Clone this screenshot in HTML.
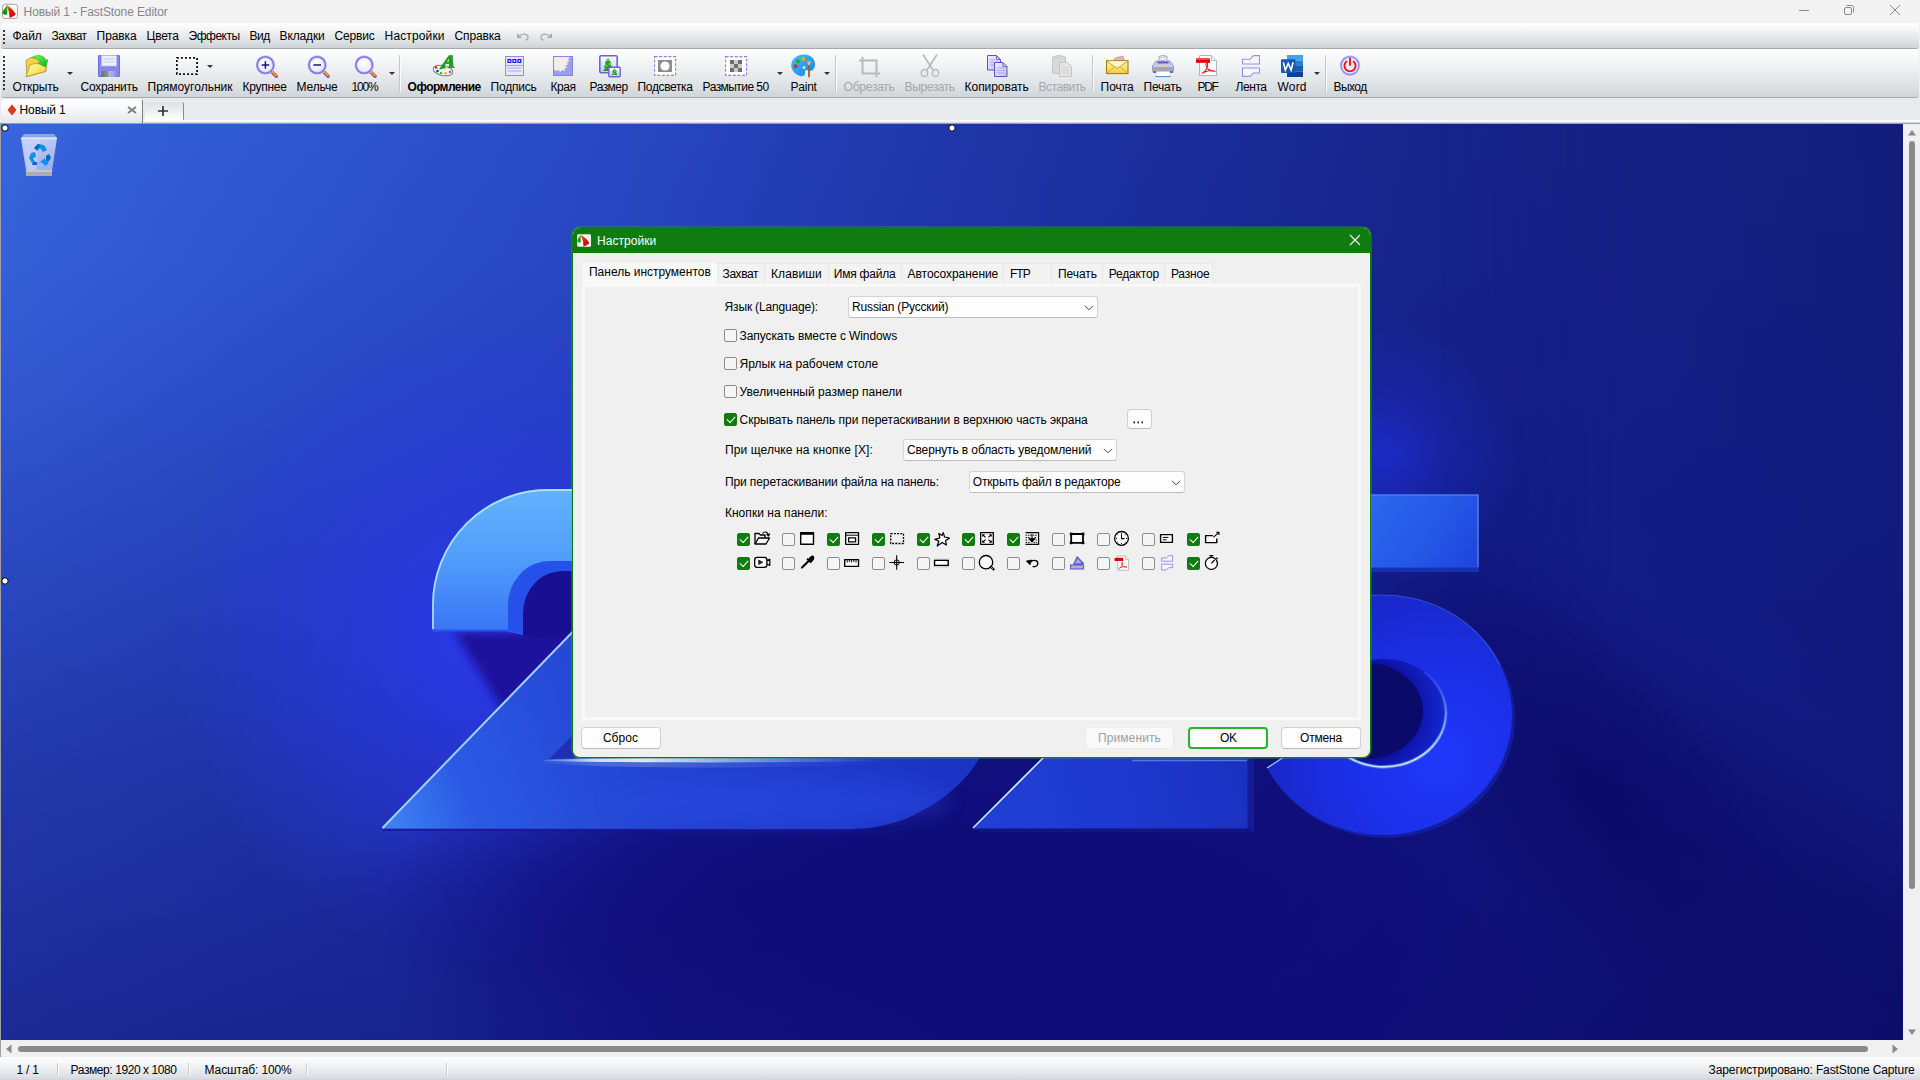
<!DOCTYPE html>
<html lang="ru"><head>
<meta charset="utf-8">
<title>Новый 1 - FastStone Editor</title>
<style>
*{box-sizing:border-box;margin:0;padding:0}
html,body{width:1920px;height:1080px;overflow:hidden}
body{position:relative;background:#f0f0f0;font-family:"Liberation Sans",sans-serif;font-size:12px;color:#000;line-height:14px}
.abs{position:absolute}
.t{position:absolute;white-space:nowrap;line-height:14px;height:14px;margin-left:.6px}
svg{position:absolute;overflow:visible}
/* ---------- chrome ---------- */
#titlebar{left:0;top:0;width:1920px;height:23px;background:#f3f3f3}
#menubar{left:1px;top:23px;width:1918px;height:26px;border-radius:3px;
  background:linear-gradient(#ffffff 0,#fcfdfd 10%,#eff2f3 35%,#dde2e5 72%,#cdd3d7 100%);border-bottom:1px solid #a6aaad}
#toolbar{left:1px;top:49px;width:1918px;height:49px;border-radius:3px;
  background:linear-gradient(#ffffff 0,#fbfcfc 6%,#eff1f3 38%,#e0e4e7 72%,#cfd5d9 100%);border-bottom:1px solid #a6aaad}
#tabbar{left:0;top:98px;width:1920px;height:26px;background:#e8ebee}
.grip{position:absolute;left:2px;width:2px;
  background:repeating-linear-gradient(#3a3a3a 0,#3a3a3a 2px,transparent 2px,transparent 4px)}
.sep{position:absolute;top:55px;width:2px;height:37px;background:linear-gradient(90deg,#c4c8cc 0,#c4c8cc 1px,#fbfbfc 1px)}
.dd{position:absolute;width:0;height:0;border:3px solid transparent;border-top:3px solid #333;border-bottom:0}
.t.dis{color:#a6a6a6}
/* ---------- status ---------- */
#status{left:0;top:1057px;width:1920px;height:23px;background:linear-gradient(#ffffff 0,#f2f4f6 35%,#dde1e5 85%,#d2d6da 100%)}
.ssep{position:absolute;top:6px;width:2px;height:13px;background:linear-gradient(90deg,#c9cdd1 0,#c9cdd1 1px,#fff 1px)}
/* ---------- dialog ---------- */
#dlg{left:572px;top:227px;width:799px;height:531px;border-radius:8px;background:#f0f0f0;border:1px solid #107c10;overflow:hidden;
  box-shadow:0 0 0 0.5px rgba(40,200,40,.55)}
#dlgtitle{left:0;top:0;width:797px;height:26px;background:#107c10}
.cb{position:absolute;width:13px;height:13px;border:1px solid #8c8c8c;border-radius:2px;background:#f5f5f5}
.cb.on{background:#107c10;border-color:#107c10}
.cb.on:after{content:"";position:absolute;left:2px;top:2px;width:7px;height:4px;border-left:1.5px solid #fff;border-bottom:1.5px solid #fff;transform:rotate(-48deg);transform-origin:50% 50%}
.combo{position:absolute;background:#fdfdfd;border:1px solid #d4d4d4;border-bottom-color:#bdbdbd;border-radius:3px}
.btn{position:absolute;background:#fdfdfd;border:1px solid #d0d0d0;border-bottom-color:#bcbcbc;border-radius:4px}
.dtab{position:absolute;border:1px solid #e7e7e7;border-bottom:0;background:#f3f3f3}
</style>
</head>
<body>
<!-- WALLPAPER -->
<div class="abs" id="canvas" style="left:1px;top:124px;width:1902px;height:916px;overflow:hidden;background:#1a2a9a">
<svg width="1902" height="916" viewBox="1 124 1902 916" style="left:0;top:0">
<defs>
<linearGradient id="bgH" x1="0" y1="0" x2="1" y2="0">
<stop offset="0" stop-color="#3865dc"></stop><stop offset=".12" stop-color="#3059d4"></stop><stop offset=".30" stop-color="#294ac6"></stop>
<stop offset=".42" stop-color="#233eb4"></stop><stop offset=".55" stop-color="#1d32a2"></stop><stop offset=".70" stop-color="#182891"></stop>
<stop offset=".85" stop-color="#131d7b"></stop><stop offset="1" stop-color="#10196d"></stop>
</linearGradient>
<linearGradient id="bgV" x1="0" y1="0" x2="0" y2="1">
<stop offset="0" stop-color="#0a0680" stop-opacity="0"></stop><stop offset=".15" stop-color="#0a0680" stop-opacity=".05"></stop>
<stop offset=".3" stop-color="#0a0680" stop-opacity=".15"></stop><stop offset=".42" stop-color="#0a067c" stop-opacity=".25"></stop>
<stop offset=".7" stop-color="#0a0670" stop-opacity=".46"></stop><stop offset="1" stop-color="#0a0668" stop-opacity=".62"></stop>
</linearGradient>
<linearGradient id="bandG" gradientUnits="userSpaceOnUse" x1="1560" y1="760" x2="1720" y2="555">
<stop offset="0" stop-color="#1b2b9b" stop-opacity="0"></stop><stop offset=".3" stop-color="#1b2b9b" stop-opacity=".04"></stop><stop offset=".5" stop-color="#1b2b9b" stop-opacity=".22"></stop>
<stop offset=".7" stop-color="#1b2b9b" stop-opacity=".36"></stop><stop offset="1" stop-color="#1a2a9a" stop-opacity=".32"></stop>
</linearGradient>
<linearGradient id="bandM" gradientUnits="userSpaceOnUse" x1="1440" y1="0" x2="1620" y2="0">
<stop offset="0" stop-color="#fff" stop-opacity="0"></stop><stop offset="1" stop-color="#fff" stop-opacity="1"></stop>
</linearGradient>
<mask id="bandMask" maskUnits="userSpaceOnUse" x="1" y="124" width="1902" height="916"><rect x="1" y="124" width="1902" height="916" fill="url(#bandM)"></rect></mask>
<radialGradient id="glow5" cx="1385" cy="455" r="135" gradientUnits="userSpaceOnUse">
<stop offset="0" stop-color="#2030e0" stop-opacity=".7"></stop><stop offset=".5" stop-color="#1e2cd0" stop-opacity=".3"></stop><stop offset="1" stop-color="#1e2cd0" stop-opacity="0"></stop>
</radialGradient>
<radialGradient id="glowL" cx="500" cy="640" r="330" gradientUnits="userSpaceOnUse">
<stop offset="0" stop-color="#2c38ee" stop-opacity=".95"></stop><stop offset=".5" stop-color="#2a3ae6" stop-opacity=".55"></stop><stop offset="1" stop-color="#2a3ae6" stop-opacity="0"></stop>
</radialGradient>
<radialGradient id="darkC" cx="1000" cy="930" r="620" gradientUnits="userSpaceOnUse" gradientTransform="translate(0 420) scale(1 .55)">
<stop offset="0" stop-color="#0e0a78" stop-opacity=".95"></stop><stop offset=".6" stop-color="#0e0a78" stop-opacity=".7"></stop><stop offset="1" stop-color="#0e0a78" stop-opacity="0"></stop>
</radialGradient>
<linearGradient id="faceA" x1="0" y1="489" x2="0" y2="630" gradientUnits="userSpaceOnUse">
<stop offset="0" stop-color="#62b2fd"></stop><stop offset=".45" stop-color="#52a0fb"></stop><stop offset="1" stop-color="#3a76f6"></stop>
</linearGradient>
<linearGradient id="faceB" x1="382" y1="828" x2="900" y2="640" gradientUnits="userSpaceOnUse">
<stop offset="0" stop-color="#3f86f4"></stop><stop offset=".16" stop-color="#2b5ae4"></stop><stop offset=".5" stop-color="#2343d2"></stop><stop offset="1" stop-color="#1c34c6"></stop>
</linearGradient>
<linearGradient id="faceC" x1="972" y1="828" x2="1247" y2="757" gradientUnits="userSpaceOnUse">
<stop offset="0" stop-color="#2040d6"></stop><stop offset=".5" stop-color="#1e3ad0"></stop><stop offset="1" stop-color="#1a30c0"></stop>
</linearGradient>
<linearGradient id="bar5" x1="1370" y1="494" x2="1478" y2="568" gradientUnits="userSpaceOnUse">
<stop offset="0" stop-color="#2a68ee"></stop><stop offset=".6" stop-color="#2456e6"></stop><stop offset="1" stop-color="#1e44da"></stop>
</linearGradient>
<radialGradient id="ring5" cx="1440" cy="760" r="190" gradientUnits="userSpaceOnUse">
<stop offset="0" stop-color="#1f38fa"></stop><stop offset=".45" stop-color="#1c30ea"></stop><stop offset="1" stop-color="#1826c4"></stop>
</radialGradient>
<linearGradient id="hlBase" gradientUnits="userSpaceOnUse" x1="542" y1="0" x2="878" y2="0"><stop offset="0" stop-color="#8fc4ff" stop-opacity=".25"></stop><stop offset=".15" stop-color="#dbe7ee" stop-opacity=".9"></stop><stop offset=".3" stop-color="#e6efef" stop-opacity=".95"></stop><stop offset=".6" stop-color="#a4c6f2" stop-opacity=".65"></stop><stop offset="1" stop-color="#5a90ff" stop-opacity=".1"></stop></linearGradient>
<linearGradient id="binG" x1="0" y1="0" x2=".3" y2="1"><stop offset="0" stop-color="#c6d2f8"></stop><stop offset="1" stop-color="#9db2ea"></stop></linearGradient>
<radialGradient id="wall5" cx="1366" cy="711" r="80" gradientUnits="userSpaceOnUse"><stop offset=".6" stop-color="#0c10a0"></stop><stop offset="1" stop-color="#1628d4"></stop></radialGradient>
<linearGradient id="hl5" gradientUnits="userSpaceOnUse" x1="1432" y1="668" x2="1372" y2="770"><stop offset="0" stop-color="#7fb6ff" stop-opacity="0"></stop><stop offset=".35" stop-color="#9ccfff" stop-opacity=".7"></stop><stop offset=".7" stop-color="#c8eeff" stop-opacity="1"></stop><stop offset="1" stop-color="#bfe6ff" stop-opacity=".95"></stop></linearGradient>
<filter id="b4" x="-20%" y="-20%" width="140%" height="140%"><feGaussianBlur stdDeviation="4"></feGaussianBlur></filter>
<filter id="b8" x="-30%" y="-30%" width="160%" height="160%"><feGaussianBlur stdDeviation="9"></feGaussianBlur></filter>
<filter id="b20" x="-100%" y="-100%" width="300%" height="300%"><feGaussianBlur stdDeviation="55"></feGaussianBlur></filter>
<filter id="b1"><feGaussianBlur stdDeviation=".6"></feGaussianBlur></filter>
<radialGradient id="blobL"><stop offset="0" stop-color="#1c2c9a" stop-opacity=".55"></stop><stop offset=".5" stop-color="#1c2c9a" stop-opacity=".3"></stop><stop offset="1" stop-color="#1c2c9a" stop-opacity="0"></stop></radialGradient>
<radialGradient id="blobD"><stop offset="0" stop-color="#0e0a76" stop-opacity=".6"></stop><stop offset=".6" stop-color="#0e0a76" stop-opacity=".3"></stop><stop offset="1" stop-color="#0e0a76" stop-opacity="0"></stop></radialGradient>
<radialGradient id="blobS"><stop offset="0" stop-color="#0a0766" stop-opacity=".65"></stop><stop offset=".55" stop-color="#0a0766" stop-opacity=".35"></stop><stop offset="1" stop-color="#0a0766" stop-opacity="0"></stop></radialGradient>
</defs>
<rect x="1" y="124" width="1902" height="916" fill="url(#bgH)"></rect>
<rect x="1" y="124" width="1902" height="916" fill="url(#bgV)"></rect>
<rect x="1" y="124" width="1902" height="916" fill="url(#glowL)"></rect>
<rect x="1" y="124" width="1902" height="916" fill="url(#darkC)"></rect>
<!-- light band right -->
<rect x="1400" y="124" width="503" height="916" fill="url(#bandG)" mask="url(#bandMask)"></rect>
<rect x="1200" y="280" width="400" height="400" fill="url(#glow5)"></rect>
<!-- shadows -->
<polygon points="455,632 523,632 640,600 640,760 548,760 500,706" fill="#1a0f96" opacity=".9" filter="url(#b4)"></polygon>
<ellipse cx="860" cy="900" rx="560" ry="120" fill="url(#blobD)"></ellipse>
<ellipse cx="0" cy="0" rx="330" ry="130" transform="translate(1590 790) rotate(48)" fill="url(#blobS)"></ellipse>
<!-- 2 : hook -->
<path d="M523,636 V612 A40,42 0 0 1 565,570 H640 V640 Z" fill="#190f92"></path>
<path d="M508,632 V605 A42,44 0 0 1 550,561 H640 V571 H565 A40,42 0 0 0 523,613 V634 Z" fill="#2650ea"></path>
<path d="M432,630 V605 A116,116 0 0 1 548,489 H640 V561 H550 A42,44 0 0 0 508,605 V630 Z" fill="url(#faceA)"></path>
<path d="M433,629 V605 A115,115 0 0 1 548,490 H640" fill="none" stroke="#b6e2ff" stroke-width="1.8" opacity=".9"></path>
<path d="M432,630.5 H508 L523,634" fill="none" stroke="#2a56ee" stroke-width="2"></path>
<!-- 2 : diagonal + base (+0 bottom) -->
<path d="M382,828.5 L640,562 V740 H1000 L980,757 C968,778 948,800 905,819 C885,826 868,829 850,829 Z" fill="url(#faceB)"></path>
<polygon points="549,759 575,733 575,759" fill="#2029ac" opacity=".85"></polygon>
<ellipse cx="780" cy="802" rx="170" ry="24" fill="#2a4ee8" opacity=".35" filter="url(#b8)"></ellipse>
<line x1="382.5" y1="828" x2="573" y2="631.5" stroke="#a9d8ff" stroke-width="2" opacity=".95"></line>
<ellipse cx="710" cy="761.5" rx="168" ry="6" fill="url(#hlBase)" opacity=".22"></ellipse>
<ellipse cx="710" cy="760.3" rx="168" ry="2.1" fill="url(#hlBase)"></ellipse>
<rect x="383" y="829" width="470" height="2" fill="#16189a" opacity=".8"></rect>
<!-- second 2 -->
<polygon points="1247,757 1254,759 1254,833 1247,829" fill="#141c94"></polygon>
<polygon points="972.5,828.5 1247.5,828.5 1253,832 980,832" fill="#121484"></polygon>
<polygon points="972.5,828.5 1075,726 1247.5,726 1247.5,828.5" fill="url(#faceC)"></polygon>
<line x1="973" y1="828" x2="1044" y2="757" stroke="#cfe6ff" stroke-width="1.6"></line>
<line x1="1132" y1="760.5" x2="1247" y2="760.5" stroke="#5a8cf0" stroke-width="1.5" opacity=".8"></line>
<!-- 5 -->
<rect x="1340" y="567" width="139" height="5" fill="#1630b4"></rect>
<rect x="1340" y="494.5" width="138.5" height="73" fill="url(#bar5)"></rect>
<path d="M1340,495 H1478 V567" fill="none" stroke="#5f9cff" stroke-width="1.2" opacity=".8"></path>
<g clip-path="url(#clip5)">
<ellipse cx="1386" cy="718" rx="129" ry="120" fill="#131c9c"></ellipse>
<ellipse cx="1383" cy="715" rx="129" ry="120" fill="url(#ring5)"></ellipse>
<ellipse cx="1384" cy="713" rx="62" ry="54" fill="url(#wall5)"></ellipse>
<ellipse cx="1366" cy="711" rx="57" ry="48" fill="#0b0a6a"></ellipse>
<path d="M1424,671.7 A62,54 0 1 1 1330,739.6" fill="none" stroke="url(#hl5)" stroke-width="3.6" opacity=".35"></path>
<path d="M1424,671.7 A62,54 0 1 1 1330,739.6" fill="none" stroke="url(#hl5)" stroke-width="1.7"></path>
<path d="M1300,623 A129,120 0 0 1 1500,665" fill="none" stroke="#4a78ff" stroke-width="1.2" opacity=".5"></path>
</g>
<clipPath id="clip5"><polygon points="1267,768 1300,745 1300,560 1560,560 1560,900 1200,900 1200,780"></polygon></clipPath>
<line x1="1267" y1="768" x2="1284" y2="757" stroke="#9cc8ff" stroke-width="1.2"></line>
<!-- recycle bin -->
<g>
<polygon points="24,134 54,134 57,138 21,138" fill="#8fa6e4"></polygon>
<polygon points="21,138 57,138 52,171 26,171" fill="url(#binG)"></polygon>
<polygon points="23,139 40,139 36,170 27,170" fill="#c6d2f8" opacity=".7"></polygon>
<rect x="21" y="137.5" width="36" height="1.5" fill="#e6ecff"></rect>
<rect x="26" y="170" width="26" height="6" fill="#a9adb0"></rect>
<rect x="26" y="170" width="26" height="2" fill="#c4c8cc"></rect>
<path d="M34,148 l4,-4 6,1 3,5 -4,2 -3,-4 -3,3z" fill="#0a92ea"></path>
<path d="M34,148 l4,-4 2,1 -2,5z" fill="#0868c4"></path>
<path d="M31,153 l4,-1 1,5 -3,1 2,4 -3,1 -3,-5z" fill="#0a92ea"></path>
<path d="M33,162 h4 v3 h-5z" fill="#0868c4"></path>
<path d="M40,162 l5,-4 v2 l4,-1 -1,5 -4,2 v-2z" fill="#0a92ea"></path>
<path d="M46,156 l3,-2 2,4 -2,3 -3,-1z" fill="#0868c4"></path>
</g>
<!-- handles -->
<circle cx="5" cy="128" r="3.2" fill="#fff" stroke="#000" stroke-width="1"></circle>
<circle cx="952" cy="128" r="3.2" fill="#fff" stroke="#000" stroke-width="1"></circle>
<circle cx="5" cy="581" r="3.2" fill="#fff" stroke="#000" stroke-width="1"></circle>
</svg>

</div>
<div class="abs" style="left:0;top:124px;width:1px;height:934px;background:#a0a0a0"></div>

<!-- TITLE BAR -->
<div class="abs" id="titlebar">
<svg width="20" height="20" viewBox="0 0 20 20" style="left:0;top:0">
<defs><linearGradient id="sailG" x1="0" y1="0" x2="0" y2="1"><stop offset="0" stop-color="#2bd326"></stop><stop offset="1" stop-color="#0a860f"></stop></linearGradient>
<linearGradient id="sailR" x1="0" y1="0" x2=".6" y2="1"><stop offset="0" stop-color="#ff6a24"></stop><stop offset=".55" stop-color="#e81a08"></stop><stop offset="1" stop-color="#c40000"></stop></linearGradient></defs>
<rect x="2.5" y="4.3" width="15" height="14.2" rx="2.2" fill="#f6f6f6" stroke="#a9a9a9"></rect>
<path d="M10.8,3 C9.4,4.4 8,5.4 7.3,6 C7.6,8.6 7.2,12 6.8,14.8 C5.2,15 3.4,14.4 2.1,13 C3,10.6 4.8,7.8 6.6,6 C8,5 9.6,3.8 10.8,3 Z" fill="url(#sailG)"></path>
<path d="M6.4,5.3 C10,6.8 13.8,10.4 15.8,14.4 C14,16 11.6,17.2 9.5,17.8 C9.6,13.4 8.4,8.8 6.4,5.3 Z" fill="url(#sailR)"></path>
</svg>
<span class="t" style="left: 23px; top: 5px; color: rgb(134, 134, 134); letter-spacing: -0.12px;">Новый 1 - FastStone Editor</span>
<svg width="12" height="12" viewBox="0 0 12 12" style="left:1798px;top:4px"><path d="M1,6.5 H11" stroke="#8a8a8a" stroke-width="1"></path></svg>
<svg width="12" height="12" viewBox="0 0 12 12" style="left:1843px;top:4px"><rect x="1.5" y="3.5" width="7" height="7" rx="1.5" fill="none" stroke="#8a8a8a"></rect><path d="M3.5,1.5 H8.5 A2,2 0 0 1 10.5,3.5 V8.5" fill="none" stroke="#8a8a8a"></path></svg>
<svg width="12" height="12" viewBox="0 0 12 12" style="left:1889px;top:4px"><path d="M1,1 L11,11 M11,1 L1,11" stroke="#8a8a8a" stroke-width="1"></path></svg>

</div>
<!-- MENU -->
<div class="abs" id="menubar">
<div class="grip" style="top:7px;height:14px"></div>
<span class="t" style="left: 11px; top: 6px; letter-spacing: -0.13px;">Файл</span>
<span class="t" style="left: 50px; top: 6px; letter-spacing: -0.51px;">Захват</span>
<span class="t" style="left: 95px; top: 6px; letter-spacing: -0.09px;">Правка</span>
<span class="t" style="left: 145px; top: 6px; letter-spacing: -0.29px;">Цвета</span>
<span class="t" style="left: 187px; top: 6px; letter-spacing: -0.51px;">Эффекты</span>
<span class="t" style="left: 248px; top: 6px; letter-spacing: -0.57px;">Вид</span>
<span class="t" style="left: 278px; top: 6px; letter-spacing: -0.15px;">Вкладки</span>
<span class="t" style="left: 333px; top: 6px; letter-spacing: -0.18px;">Сервис</span>
<span class="t" style="left: 383px; top: 6px; letter-spacing: 0.13px;">Настройки</span>
<span class="t" style="left: 453px; top: 6px; letter-spacing: -0.15px;">Справка</span>
<svg width="14" height="10" viewBox="0 0 14 10" style="left:515px;top:9px"><path d="M1,1 V6 H6 Z" fill="#a9adb2"></path><path d="M3,5 C5,1.5 11,1 12,4.5 C12.5,6.5 11,8 9.5,8" fill="none" stroke="#a9adb2" stroke-width="1.3"></path></svg>
<svg width="14" height="10" viewBox="0 0 14 10" style="left:538px;top:9px"><path d="M13,1 V6 H8 Z" fill="#a9adb2"></path><path d="M11,5 C9,1.5 3,1 2,4.5 C1.5,6.5 3,8 4.5,8" fill="none" stroke="#a9adb2" stroke-width="1.3"></path></svg>

</div>
<!-- TOOLBAR -->
<div class="abs" id="toolbar">
<div class="grip" style="top:7px;height:34px"></div>
<span class="t" style="left: 11px; top: 31px; letter-spacing: -0.16px;">Открыть</span>
<span class="t" style="left: 79px; top: 31px; letter-spacing: -0.29px;">Сохранить</span>
<span class="t" style="left: 146px; top: 31px; letter-spacing: 0.01px;">Прямоугольник</span>
<span class="t" style="left: 241px; top: 31px; letter-spacing: -0.29px;">Крупнее</span>
<span class="t" style="left: 295px; top: 31px; letter-spacing: -0.13px;">Мельче</span>
<span class="t" style="left: 350px; top: 31px; letter-spacing: -1.18px;">100%</span>
<span class="t" style="left: 406px; top: 31px; font-weight: bold; letter-spacing: -0.55px;">Оформление</span>
<span class="t" style="left: 489px; top: 31px; letter-spacing: -0.21px;">Подпись</span>
<span class="t" style="left: 549px; top: 31px; letter-spacing: -0.46px;">Края</span>
<span class="t" style="left: 588px; top: 31px; letter-spacing: -0.54px;">Размер</span>
<span class="t" style="left: 636px; top: 31px; letter-spacing: -0.36px;">Подсветка</span>
<span class="t" style="left: 701px; top: 31px; letter-spacing: -0.55px;">Размытие 50</span>
<span class="t" style="left: 789px; top: 31px; letter-spacing: -0.27px;">Paint</span>
<span class="t dis" style="left: 842px; top: 31px; letter-spacing: -0.24px;">Обрезать</span>
<span class="t dis" style="left: 903px; top: 31px; letter-spacing: -0.42px;">Вырезать</span>
<span class="t" style="left: 963px; top: 31px; letter-spacing: -0.06px;">Копировать</span>
<span class="t dis" style="left: 1037px; top: 31px; letter-spacing: -0.48px;">Вставить</span>
<span class="t" style="left: 1099px; top: 31px; letter-spacing: -0.07px;">Почта</span>
<span class="t" style="left: 1142px; top: 31px; letter-spacing: -0.22px;">Печать</span>
<span class="t" style="left: 1196px; top: 31px; letter-spacing: -1.33px;">PDF</span>
<span class="t" style="left: 1234px; top: 31px; letter-spacing: -0.44px;">Лента</span>
<span class="t" style="left: 1276px; top: 31px; letter-spacing: 0.14px;">Word</span>
<span class="t" style="left: 1332px; top: 31px; letter-spacing: -0.58px;">Выход</span>
<div class="sep" style="left:398px;top:6px"></div>
<div class="sep" style="left:834px;top:6px"></div>
<div class="sep" style="left:1091px;top:6px"></div>
<div class="sep" style="left:1324px;top:6px"></div>
<div class="dd" style="left:66px;top:23px"></div>
<div class="dd" style="left:206px;top:16px"></div>
<div class="dd" style="left:388px;top:23px"></div>
<div class="dd" style="left:776px;top:23px"></div>
<div class="dd" style="left:823px;top:23px"></div>
<div class="dd" style="left:1313px;top:23px"></div>
<svg width="1400" height="48" viewBox="0 50 1400 48" style="left:-1px;top:1px">
<defs>
<linearGradient id="gFold" x1="0" y1="0" x2="1" y2="1"><stop offset="0" stop-color="#fffac0"></stop><stop offset=".55" stop-color="#fae860"></stop><stop offset="1" stop-color="#eac436"></stop></linearGradient>
<linearGradient id="gGreen" x1="0" y1="0" x2="1" y2="1"><stop offset="0" stop-color="#8cf65a"></stop><stop offset=".6" stop-color="#2fd62c"></stop><stop offset="1" stop-color="#12a81c"></stop></linearGradient>
<radialGradient id="gLens" cx=".4" cy=".35" r=".7"><stop offset="0" stop-color="#ffffff"></stop><stop offset="1" stop-color="#e6e6fb"></stop></radialGradient>
<linearGradient id="gDoc" x1="0" y1="0" x2="1" y2="1"><stop offset="0" stop-color="#f0eeff"></stop><stop offset="1" stop-color="#c2bef6"></stop></linearGradient>
<linearGradient id="gEnv" x1="0" y1="0" x2="0" y2="1"><stop offset="0" stop-color="#fff6a8"></stop><stop offset="1" stop-color="#f3cf3e"></stop></linearGradient>
<linearGradient id="gPal" x1="0" y1="0" x2="1" y2="1"><stop offset="0" stop-color="#43c0fa"></stop><stop offset="1" stop-color="#1483e0"></stop></linearGradient>
<linearGradient id="gPic" x1="0" y1="0" x2="0" y2="1"><stop offset="0" stop-color="#ffffff"></stop><stop offset="1" stop-color="#bcd0f6"></stop></linearGradient>
<linearGradient id="gShut" x1="0" y1="0" x2="1" y2="0"><stop offset="0" stop-color="#60707a"></stop><stop offset=".45" stop-color="#8c989f"></stop><stop offset=".55" stop-color="#c0c6ea"></stop><stop offset="1" stop-color="#8a8ae0"></stop></linearGradient>
</defs>
<!-- open -->
<path d="M26,60.5 L31,57.5 L37,58.5 L38,61 L46,62.5 L46,71 L27,76.5 Z" fill="#f2d44c" stroke="#b98c1e" stroke-width=".8"></path>
<path d="M26,76.6 L30,64.5 L47,61.5 L45.5,71.5 Z" fill="url(#gFold)" stroke="#b98c1e" stroke-width=".8"></path>
<path d="M31.5,57.6 C37,54 44.5,55.5 46,60.2 L48,59.6 L45.4,67 L38,63.4 L40.8,62.4 C39.6,59.6 36.5,58 31.5,57.6 Z" fill="url(#gGreen)" stroke="#18a81e" stroke-width=".5"></path>
<!-- save -->
<rect x="98.5" y="55.5" width="21" height="21" rx=".5" fill="#8686ee" stroke="#6e6edc" stroke-width="1"></rect>
<rect x="101.5" y="55.5" width="15" height="10.5" fill="#e9f1fd" stroke="#b5c0ea" stroke-width=".6"></rect>
<path d="M103.5,59 H114.5 M103.5,62 H114.5" stroke="#b9c4da" stroke-width=".8"></path>
<rect x="101.5" y="71" width="15" height="6" fill="url(#gShut)"></rect>
<rect x="110" y="72" width="3" height="5" fill="#a6a6ec"></rect>
<!-- rect select -->
<rect x="176.9" y="57.9" width="20.2" height="16.2" fill="none" stroke="#111" stroke-width="1.8" stroke-dasharray="2 2.04"></rect>
<!-- zoom in/out/100 -->
<g id="mag">
<path d="M271.3,71.3 L276.3,76.3" stroke="#9c3f96" stroke-width="3.4" stroke-linecap="round"></path>
<path d="M271.6,71.0 L276.2,75.6" stroke="#e0a91e" stroke-width="2" stroke-linecap="round"></path>
<circle cx="265.4" cy="65" r="8.3" fill="url(#gLens)" stroke="#c9c5f6" stroke-width="3"></circle>
<circle cx="265.4" cy="65" r="8.3" fill="none" stroke="#7d74e4" stroke-width="1.5"></circle>
</g>
<path d="M261.6,65 H269.2 M265.4,61.2 V68.8" stroke="#15158a" stroke-width="1.5"></path>
<use href="#mag" x="51.8"></use>
<path d="M313.4,65 H321" stroke="#15158a" stroke-width="1.5"></path>
<use href="#mag" x="98.8"></use>
<!-- Oformlenie -->
<ellipse cx="443" cy="70.5" rx="10" ry="5" transform="rotate(12 443 70.5)" fill="#f2f2f2" stroke="#6f8a6f" stroke-width="1"></ellipse>
<ellipse cx="445.5" cy="67.5" rx="1.8" ry="1.2" fill="#fff" stroke="#9aa" stroke-width=".5"></ellipse>
<circle cx="436" cy="67.5" r="1.2" fill="#f01818"></circle><circle cx="437.5" cy="71" r="1.2" fill="#1818f0"></circle><circle cx="441" cy="73" r="1.2" fill="#28c828"></circle><circle cx="445.5" cy="73.3" r="1.2" fill="#ff9820"></circle><circle cx="450" cy="72" r="1.2" fill="#f020e0"></circle>
<path d="M439.5,69 L449,55.5 L452.5,55.5 L453,66 L454.5,67.5 L448,67.5 L449.5,66 L449.3,63.5 L445.6,63.5 L444.3,66 L445.8,67.5 L440.5,69 Z M446.4,62 L449.2,62 L449,58 Z" fill="#17a317" stroke="#0d7a0d" stroke-width=".5" fill-rule="evenodd"></path>
<!-- Podpis -->
<rect x="505.5" y="56.5" width="18" height="19" fill="#ebe7fd" stroke="#8c8cf0"></rect>
<rect x="506" y="57" width="17" height="8" fill="#f3dfee"></rect>
<path d="M506,65.5 H523" stroke="#8c8cf0" stroke-width=".8"></path>
<g fill="#fff" stroke="#1616ee" stroke-width="1.2"><rect x="508" y="59.6" width="2.8" height="2.8"></rect><rect x="513" y="59.6" width="2.8" height="2.8"></rect><rect x="518" y="59.6" width="2.8" height="2.8"></rect></g>
<path d="M507.5,68 H521.5 M507.5,71 H521.5" stroke="#aaa6f2" stroke-width="1"></path>
<!-- Kraya -->
<rect x="553.5" y="56.5" width="19" height="19" fill="#9c9cf2" stroke="#8484e6"></rect>
<path d="M554,57 H570 L568,59.5 L569.5,61 L567,62.5 L568,64.5 L565.5,65.5 L567,67.5 L564.5,68.5 L565,71 L562,70 L560.5,72 L558.5,70 L556.5,71 L554,69.5 Z" fill="#f4ece6"></path>
<!-- Razmer -->
<rect x="599.8" y="55.8" width="17.4" height="17" rx="1.5" fill="url(#gPic)" stroke="#6a62d8" stroke-width="1.6"></rect>
<path d="M608,58 L604.5,63.5 H606 L603.5,67.5 H605.5 L603,71 H613 L610.5,67.5 H612.5 L610,63.5 H611.5 Z" fill="#1f9d2b"></path>
<g fill="#f4ee28"><circle cx="608" cy="60.5" r=".8"></circle><circle cx="609.5" cy="64" r=".8"></circle><circle cx="606.5" cy="66" r=".8"></circle><circle cx="610" cy="68.5" r=".8"></circle></g>
<rect x="608.8" y="67.3" width="11.4" height="9.4" rx="1" fill="url(#gPic)" stroke="#6a62d8" stroke-width="1.4"></rect>
<path d="M614.5,68.5 L612,72 H613 L611.5,75 H617.5 L616,72 H617 Z" fill="#1f9d2b"></path>
<circle cx="614.8" cy="71" r=".7" fill="#f4ee28"></circle><circle cx="613.8" cy="73.5" r=".7" fill="#f4ee28"></circle>
<!-- Podsvetka -->
<rect x="654.6" y="56.6" width="21" height="18.8" fill="#fff" stroke="#8a84dc" stroke-width="1.1" stroke-dasharray="3 1.6"></rect>
<rect x="658" y="60" width="14" height="12" fill="#8c8c8c"></rect>
<circle cx="665" cy="66" r="4.6" fill="#fff"></circle>
<!-- Razmytie -->
<rect x="725.6" y="56.6" width="21" height="18.8" fill="#fff" stroke="#8a84dc" stroke-width="1.1" stroke-dasharray="3 1.6"></rect>
<g fill="#6e6e6e"><rect x="730" y="60" width="4" height="4"></rect><rect x="738" y="60" width="4" height="4"></rect><rect x="734" y="64" width="4" height="4"></rect><rect x="730" y="68" width="4" height="4"></rect><rect x="738" y="68" width="4" height="4"></rect></g>
<g fill="#cdcdcd"><rect x="734" y="60" width="4" height="4"></rect><rect x="730" y="64" width="4" height="4"></rect><rect x="738" y="64" width="4" height="4"></rect><rect x="734" y="68" width="4" height="4"></rect></g>
<!-- Paint -->
<path d="M803,54.5 C810,54 815.5,58.5 815,65 C814.6,70 811,72 808,70.5 C806,69.5 804.5,70.5 805,72.5 C805.5,75 803,77 800,76 C794,74 790,68.5 791.5,63 C793,57.5 798,55 803,54.5 Z" fill="url(#gPal)"></path>
<circle cx="795.5" cy="66.3" r="2" fill="#e8281c"></circle><circle cx="798" cy="61.5" r="2" fill="#2fa82a"></circle><circle cx="803.5" cy="59" r="2" fill="#f7a614"></circle><circle cx="804" cy="67.5" r="1.3" fill="#fff"></circle>
<path d="M807,61.5 L811,61 L809.8,65.5 H808.2 Z" fill="#e8b878"></path>
<rect x="808.1" y="65" width="1.8" height="12.3" fill="#b45a20"></rect>
<!-- crop (disabled) -->
<path d="M862.5,57 V73.5 H880 M859,60.5 H876.5 V77" fill="none" stroke="#b9b9b9" stroke-width="2"></path>
<!-- scissors (disabled) -->
<path d="M923,54.5 L933,70 M937,54.5 L927,70" stroke="#b9b9b9" stroke-width="1.6" fill="none"></path>
<ellipse cx="924.5" cy="73" rx="3.2" ry="3.6" fill="none" stroke="#b9b9b9" stroke-width="1.5"></ellipse>
<ellipse cx="935.5" cy="73" rx="3.2" ry="3.6" fill="none" stroke="#b9b9b9" stroke-width="1.5"></ellipse>
<!-- copy -->
<path d="M987.5,55.5 H996.5 L1000.5,59.5 V70 H987.5 Z" fill="url(#gDoc)" stroke="#5b52c8"></path>
<path d="M996.5,55.5 V59.5 H1000.5" fill="none" stroke="#5b52c8" stroke-width=".8"></path>
<path d="M989.5,60 H994.5 M989.5,62.5 H994 M989.5,65 H994" stroke="#a49eea" stroke-width=".8"></path>
<path d="M994.5,62.5 H1003 L1007,66.5 V76.5 H994.5 Z" fill="url(#gDoc)" stroke="#5b52c8"></path>
<path d="M1003,62.5 V66.5 H1007" fill="none" stroke="#5b52c8" stroke-width=".8"></path>
<path d="M996.5,68 H1005 M996.5,70.5 H1005 M996.5,73 H1005" stroke="#a49eea" stroke-width=".8"></path>
<!-- paste (disabled) -->
<rect x="1052.5" y="56.5" width="13" height="17" rx="1.5" fill="#d9d9d9" stroke="#c6c6c6"></rect>
<rect x="1055.5" y="55" width="7" height="3" rx="1" fill="#cfcfcf"></rect>
<path d="M1059.5,62.5 H1067.5 L1071.5,66.5 V76.5 H1059.5 Z" fill="#e4e4e4" stroke="#c4c4c4"></path>
<path d="M1061.5,68 H1069.5 M1061.5,70.5 H1069.5 M1061.5,73 H1069.5" stroke="#cdcdcd" stroke-width=".8"></path>
<!-- mail -->
<path d="M1113.5,61 L1115,58 L1123,56 L1124.5,61 Z" fill="#f3a8c8" stroke="#c98a4a" stroke-width=".6"></path>
<rect x="1106.5" y="60.8" width="21.5" height="12.8" fill="url(#gEnv)" stroke="#a97a10" stroke-width="1.1"></rect>
<path d="M1107,61.3 L1117.2,68.5 L1127.5,61.3" fill="#fff9c4" stroke="#b58a1a" stroke-width=".8"></path>
<path d="M1107,73 L1114.5,66.8 M1127.5,73 L1120,66.8" stroke="#c9a030" stroke-width=".8"></path>
<!-- print -->
<path d="M1159,60 V56.5 Q1163,54.5 1167,56.5 V60" fill="#f0f0f0" stroke="#9a9a9a" stroke-width=".9"></path>
<rect x="1161.3" y="57.3" width="3.4" height="3" fill="#fff" stroke="#aaa" stroke-width=".5"></rect>
<path d="M1156,61 H1170 L1173.5,66 V71 H1152.5 V66 Z" fill="#c8c8f4" stroke="#8a8aa8" stroke-width=".8"></path>
<rect x="1157.5" y="61.5" width="11" height="2" fill="#5a5ad6"></rect>
<rect x="1161.5" y="65.5" width="3.5" height="1.3" fill="#f2e02c"></rect>
<rect x="1152.5" y="67" width="21" height="4.5" fill="#a6a6ae"></rect>
<rect x="1153" y="71" width="3" height="2" fill="#6a6ad6"></rect><rect x="1170" y="71" width="3" height="2" fill="#6a6ad6"></rect>
<path d="M1157,71.5 H1169 L1170.5,76.3 H1155.5 Z" fill="#fff" stroke="#c4c4c4" stroke-width=".5"></path>
<path d="M1155.5,76.6 H1170.5" stroke="#2a8ab8" stroke-width=".9"></path>
<!-- pdf -->
<path d="M1199.5,55.5 H1211.5 L1216.5,60.5 V75.5 H1199.5 Z" fill="#fff" stroke="#b5b5b5"></path>
<path d="M1211.5,55.5 V60.5 H1216.5" fill="#ececec" stroke="#b5b5b5" stroke-width=".8"></path>
<rect x="1196" y="58.4" width="14" height="4.4" fill="#e00000"></rect>
<rect x="1196" y="58.4" width="14" height="1.6" fill="#f44"></rect>
<path d="M1202,73.5 C1206,71 1208.5,66.5 1207.5,63.8 C1206.8,62.4 1205.6,63.6 1206.2,65.8 C1207,69 1210.5,71.5 1214.5,71.3 C1212,69.8 1206,70.5 1202,73.5 Z" fill="none" stroke="#e41e1e" stroke-width="1.1"></path>
<!-- lenta -->
<path d="M1242.5,59.3 L1250,59.3 L1253.5,55.6 L1259.5,55.6 V64 H1242.5 Z" fill="#f5f5fd" stroke="#9a92e2" stroke-width="1.1"></path>
<path d="M1242.5,68 H1259.5 V73 L1253.5,73 L1250,76.4 L1242.5,76.4 Z" fill="#f5f5fd" stroke="#9a92e2" stroke-width="1.1"></path>
<!-- word -->
<rect x="1287" y="55" width="16" height="5.5" fill="#41a5ee"></rect><rect x="1287" y="60.5" width="16" height="5.5" fill="#2b7cd3"></rect><rect x="1287" y="66" width="16" height="5.5" fill="#185abd"></rect><rect x="1287" y="71.5" width="16" height="5.5" fill="#103f91"></rect>
<rect x="1281" y="59.2" width="14.4" height="13.8" rx="1" fill="#1a56b6"></rect>
<path d="M1283.3,62.3 L1285.3,70 L1288.2,63.5 L1291.1,70 L1293.1,62.3" fill="none" stroke="#fff" stroke-width="1.6" stroke-linejoin="miter"></path>
<!-- exit -->
<circle cx="1350" cy="65.6" r="9" fill="#ebe8fd" stroke="#cfcaf8" stroke-width="2.6"></circle>
<circle cx="1350" cy="65.6" r="9" fill="none" stroke="#9088ee" stroke-width="1.3"></circle>
<path d="M1346.3,61.6 A5.6,5.6 0 1 0 1353.7,61.6" fill="none" stroke="#f01616" stroke-width="1.9" stroke-linecap="round"></path>
<path d="M1350,58.5 V65" stroke="#f01616" stroke-width="1.9" stroke-linecap="round"></path>
</svg>


</div>
<!-- TABBAR -->
<div class="abs" id="tabbar">
<div class="abs" style="left:0;top:22px;width:1920px;height:3px;background:linear-gradient(#fdfdfd 0,#f2f3f4 60%,#c9cbcd 100%)"></div>
<div class="abs" style="left:0;top:25px;width:1920px;height:1px;background:#9a9c9e"></div>
<div class="abs" style="left:1px;top:1px;width:142px;height:24px;border-radius:3px 3px 0 0;background:linear-gradient(#ffffff 0,#f6f7f8 40%,#e4e7ea 100%);border-right:1px solid #7d7f82;border-top:1px solid #fff"></div>
<div class="abs" style="left:145px;top:4px;width:39px;height:18px;border-radius:2px 2px 0 0;background:linear-gradient(#dfe2e5 0,#eef0f2 55%,#ffffff 100%);border-right:1px solid #8a8c8f"></div>
<svg width="10" height="12" viewBox="0 0 10 12" style="left:7px;top:6px"><path d="M5,0.5 L9.5,6 L5,11.5 L0.5,6 Z" fill="#d63b22"></path></svg>
<span class="t" style="left: 19px; top: 5px; letter-spacing: -0.15px;">Новый 1</span>
<svg width="10" height="8" viewBox="0 0 10 8" style="left:127px;top:8px"><path d="M1,1 L9,7 M9,1 L1,7" stroke="#7d7d7d" stroke-width="1.8"></path></svg>
<svg width="12" height="12" viewBox="0 0 12 12" style="left:157px;top:7px"><path d="M1,6 H11 M6,1 V11" stroke="#333" stroke-width="1.7"></path></svg>

</div>
<!-- SCROLLBARS -->
<div class="abs" style="left:1903px;top:124px;width:17px;height:934px;background:#f0f0f0"></div>
<div class="abs" style="left:1px;top:1040px;width:1902px;height:18px;background:#f0f0f0"></div>
<svg width="17" height="916" viewBox="1903 124 17 916" style="left:1903px;top:124px">
<path d="M1908,135.5 L1912,130 L1916,135.5 Z" fill="#8a8a8a"></path>
<rect x="1909" y="141" width="6" height="748" rx="3" fill="#8a8a8a"></rect>
<path d="M1908,1029.5 L1912,1035 L1916,1029.5 Z" fill="#8a8a8a"></path>
</svg>
<svg width="1902" height="18" viewBox="1 1040 1902 18" style="left:1px;top:1040px">
<path d="M11.5,1044.5 L6,1049 L11.5,1053.5 Z" fill="#8a8a8a"></path>
<rect x="18" y="1046" width="1850" height="6" rx="3" fill="#8a8a8a"></rect>
<path d="M1892.5,1044.5 L1898,1049 L1892.5,1053.5 Z" fill="#8a8a8a"></path>
</svg>

<!-- STATUS -->
<div class="abs" id="status">
<span class="t" style="left: 16px; top: 6px; letter-spacing: -0.27px;">1 / 1</span>
<span class="t" style="left: 70px; top: 6px; letter-spacing: -0.42px;">Размер: 1920 x 1080</span>
<span class="t" style="left: 204px; top: 6px; letter-spacing: -0.13px;">Масштаб: 100%</span>
<span class="t" style="left: 1708px; top: 6px; letter-spacing: -0.12px;">Зарегистрировано: FastStone Capture</span>
<div class="ssep" style="left:57px"></div>
<div class="ssep" style="left:188px"></div>
<div class="ssep" style="left:306px"></div>
<div class="ssep" style="left:446px"></div>

</div>
<!-- DIALOG -->
<div class="abs" id="dlg">
<div class="abs" id="dlgtitle" style="height:25px"></div>
<svg width="16" height="16" viewBox="0 0 16 16" style="left:3px;top:5px">
<rect x="1.2" y="1.2" width="13.8" height="12.6" rx="1.2" fill="#f4f4f4"></rect>
<path d="M6.2,0.4 C5.4,1.4 4.8,2 4.6,2.6 C5,5 4.8,7.6 4.4,9.6 C3.2,9.8 2.2,9.2 1.4,8.2 C1.8,6 3,3.6 4.2,2.2 C5,1.6 5.6,1 6.2,0.4 Z" fill="url(#sailG)"></path>
<path d="M4.2,1.8 C8,3.4 11.6,6.6 13.4,10.2 C11.6,11.8 9.4,12.8 7.4,13.4 C7.6,9.6 6.4,5 4.2,1.8 Z" fill="url(#sailR)"></path>
</svg>
<span class="t" style="left: 23.5px; top: 6px; color: rgb(255, 255, 255); letter-spacing: 0.03px;">Настройки</span>
<svg width="12" height="12" viewBox="0 0 12 12" style="left:776px;top:6px"><path d="M1,1 L11,11 M11,1 L1,11" stroke="#fff" stroke-width="1.1"></path></svg>
<div class="dtab" style="left:145px;top:35px;width:47px;height:21px"></div>
<div class="dtab" style="left:191px;top:35px;width:65px;height:21px"></div>
<div class="dtab" style="left:255px;top:35px;width:74px;height:21px"></div>
<div class="dtab" style="left:328px;top:35px;width:103px;height:21px"></div>
<div class="dtab" style="left:430px;top:35px;width:49px;height:21px"></div>
<div class="dtab" style="left:478px;top:35px;width:52px;height:21px"></div>
<div class="dtab" style="left:529px;top:35px;width:63px;height:21px"></div>
<div class="dtab" style="left:591px;top:35px;width:49px;height:21px"></div>
<div class="abs" style="left:9px;top:56px;width:779px;height:436px;border:3px solid #f9f9f9;background:#f0f0f0"></div>
<div class="abs" style="left:8.5px;top:33.5px;width:136.5px;height:25.5px;background:#f9f9f9;border-radius:3px 3px 0 0;border:1px solid #f2f2f2;border-bottom:0"></div>
<span class="t" style="left: 15.4px; top: 37px; letter-spacing: -0.01px;">Панель инструментов</span>
<span class="t" style="left: 149px; top: 38.5px; letter-spacing: -0.45px;">Захват</span>
<span class="t" style="left: 197.3px; top: 38.5px; letter-spacing: 0.13px;">Клавиши</span>
<span class="t" style="left: 260.2px; top: 38.5px; letter-spacing: -0.22px;">Имя файла</span>
<span class="t" style="left: 334px; top: 38.5px; letter-spacing: -0.06px;">Автосохранение</span>
<span class="t" style="left: 436.3px; top: 38.5px; letter-spacing: -0.89px;">FTP</span>
<span class="t" style="left: 484.3px; top: 38.5px; letter-spacing: -0.05px;">Печать</span>
<span class="t" style="left: 535.2px; top: 38.5px; letter-spacing: -0.19px;">Редактор</span>
<span class="t" style="left: 597.3px; top: 38.5px; letter-spacing: -0.19px;">Разное</span>
<span class="t" style="left: 151px; top: 72px; letter-spacing: -0.17px;">Язык (Language):</span>
<div class="combo" style="left:275px;top:68px;width:250px;height:22px"></div>
<span class="t" style="left: 278.5px; top: 72px; letter-spacing: -0.18px;">Russian (Русский)</span>
<svg width="10" height="6" viewBox="0 0 10 6" style="left:511px;top:77px"><path d="M1,.8 L5,4.8 L9,.8" fill="none" stroke="#444" stroke-width="1"></path></svg>
<div class="cb" style="left:151px;top:101px"></div>
<span class="t" style="left: 166px; top: 101px; letter-spacing: -0.09px;">Запускать вместе с Windows</span>
<div class="cb" style="left:151px;top:129px"></div>
<span class="t" style="left: 166px; top: 129px; letter-spacing: 0.01px;">Ярлык на рабочем столе</span>
<div class="cb" style="left:151px;top:157px"></div>
<span class="t" style="left: 166px; top: 157px; letter-spacing: 0.04px;">Увеличенный размер панели</span>
<div class="cb on" style="left:151px;top:185px"></div>
<span class="t" style="left: 166px; top: 185px; letter-spacing: -0.04px;">Скрывать панель при перетаскивании в верхнюю часть экрана</span>
<div class="btn" style="left:554px;top:181px;width:25px;height:20px"></div>
<svg width="12" height="4" viewBox="0 0 12 4" style="left:560px;top:193px"><rect x="0.5" y="0.5" width="1.5" height="1.8" fill="#111"></rect><rect x="4.5" y="0.5" width="1.5" height="1.8" fill="#111"></rect><rect x="8.5" y="0.5" width="1.5" height="1.8" fill="#111"></rect></svg>
<span class="t" style="left: 151.3px; top: 215px; letter-spacing: 0.13px;">При щелчке на кнопке [X]:</span>
<div class="combo" style="left:330px;top:211px;width:214px;height:22px"></div>
<span class="t" style="left: 333.3px; top: 215px; letter-spacing: -0.11px;">Свернуть в область уведомлений</span>
<svg width="10" height="6" viewBox="0 0 10 6" style="left:530px;top:220px"><path d="M1,.8 L5,4.8 L9,.8" fill="none" stroke="#444" stroke-width="1"></path></svg>
<span class="t" style="left: 151.3px; top: 247px; letter-spacing: -0.09px;">При перетаскивании файла на панель:</span>
<div class="combo" style="left:396px;top:243px;width:216px;height:22px"></div>
<span class="t" style="left: 399.1px; top: 247px; letter-spacing: -0.14px;">Открыть файл в редакторе</span>
<svg width="10" height="6" viewBox="0 0 10 6" style="left:598px;top:252px"><path d="M1,.8 L5,4.8 L9,.8" fill="none" stroke="#444" stroke-width="1"></path></svg>
<span class="t" style="left: 151.3px; top: 278px; letter-spacing: 0.05px;">Кнопки на панели:</span>
<div class="cb on" style="left:164px;top:305px"></div>
<div class="cb on" style="left:164px;top:329px"></div>
<div class="cb" style="left:209px;top:305px"></div>
<div class="cb" style="left:209px;top:329px"></div>
<div class="cb on" style="left:254px;top:305px"></div>
<div class="cb" style="left:254px;top:329px"></div>
<div class="cb on" style="left:299px;top:305px"></div>
<div class="cb" style="left:299px;top:329px"></div>
<div class="cb on" style="left:344px;top:305px"></div>
<div class="cb" style="left:344px;top:329px"></div>
<div class="cb on" style="left:389px;top:305px"></div>
<div class="cb" style="left:389px;top:329px"></div>
<div class="cb on" style="left:434px;top:305px"></div>
<div class="cb" style="left:434px;top:329px"></div>
<div class="cb" style="left:479px;top:305px"></div>
<div class="cb" style="left:479px;top:329px"></div>
<div class="cb" style="left:524px;top:305px"></div>
<div class="cb" style="left:524px;top:329px"></div>
<div class="cb" style="left:569px;top:305px"></div>
<div class="cb" style="left:569px;top:329px"></div>
<div class="cb on" style="left:614px;top:305px"></div>
<div class="cb on" style="left:614px;top:329px"></div>
<svg width="480" height="44" viewBox="750 529 480 44" style="left:177px;top:301px">
<g fill="none" stroke="#000" stroke-width="1.3" stroke-linejoin="round">
<!-- r1c0 open folder -->
<path d="M755,544 V533.5 H759 L760.5,535 H765 V538"></path>
<path d="M755,544 L758.5,538 H769.5 L766,544 Z" fill="#f8f8f8"></path>
<path d="M762.5,533.5 C764.5,531 768,531.5 768.5,535.5 M766.6,534 L768.6,536 L769.8,533.6" stroke-width="1.1"></path>
<!-- r1c1 window -->
<rect x="800.7" y="532.7" width="12.8" height="11.6" fill="#fff" stroke-width="1.4"></rect>
<path d="M800.5,533.6 H813.6" stroke-width="2.4"></path>
<!-- r1c2 window + object -->
<rect x="845.7" y="532.7" width="12.8" height="11.6" fill="#fff" stroke-width="1.3"></rect>
<path d="M845.7,535.2 H858.5" stroke-width="1"></path>
<rect x="848.6" y="537.8" width="7" height="4" stroke-width="1.3"></rect>
<!-- r1c3 dashed rect -->
<rect x="890.7" y="533.7" width="12.8" height="9.8" stroke-width="1.3" stroke-dasharray="2 1.2"></rect>
<!-- r1c4 star -->
<path d="M943.2,532.6 L944.6,537 L949.4,538.2 L945.6,540.6 L946.4,545 L942.2,542.4 L937.2,546 L938.8,541 L934.8,539.4 L939.8,538 L938.8,533.4 L942,535.6 Z" fill="#fff" stroke-width="1.2"></path>
<!-- r1c5 fullscreen -->
<rect x="980.7" y="532.7" width="12.6" height="11.6" fill="#fff" stroke-width="1.3"></rect>
<path d="M983,535 L985.6,537.4 M991,535 L988.4,537.4 M983,542 L985.6,539.6 M991,542 L988.4,539.6" stroke-width="1.1"></path>
<path d="M982.6,536.6 V534.6 H984.6 M989.4,534.6 H991.4 V536.6 M982.6,540.4 V542.4 H984.6 M989.4,542.4 H991.4 V540.4" stroke-width=".9"></path>
<!-- r1c6 scrolling window -->
<path d="M1025.5,532.6 H1038.6 V544.4 H1025.5" stroke-width="1.2"></path>
<path d="M1025.5,535.2 H1037 M1025.5,537.6 H1029.5 M1034.5,537.6 H1037 M1025.5,540 H1028.5 M1035.5,540 H1037 M1025.5,542.4 H1030.5 M1033.5,542.4 H1037" stroke-width=".9" stroke-dasharray="1.6 .8"></path>
<path d="M1032,534 V539 M1029,538.6 H1035 L1032,542.2 Z" fill="#000" stroke-width="1"></path>
<!-- r1c7 fixed region -->
<rect x="1071.2" y="534" width="11.8" height="8.8" fill="#fff" stroke-width="1.8"></rect>
<g fill="#000" stroke="none"><rect x="1069.8" y="532.6" width="2.6" height="2.6"></rect><rect x="1081.8" y="532.6" width="2.6" height="2.6"></rect><rect x="1069.8" y="541.6" width="2.6" height="2.6"></rect><rect x="1081.8" y="541.6" width="2.6" height="2.6"></rect></g>
<!-- r1c8 clock -->
<circle cx="1121.5" cy="538.4" r="6.9" fill="#fff" stroke-width="1.3"></circle>
<path d="M1121.5,534.2 V538.6 H1124.6" stroke-width="1.1"></path>
<g fill="#000" stroke="none"><circle cx="1121.5" cy="533.3" r=".6"></circle><circle cx="1126.6" cy="538.4" r=".6"></circle><circle cx="1121.5" cy="543.5" r=".6"></circle><circle cx="1116.4" cy="538.4" r=".6"></circle><circle cx="1125.1" cy="534.8" r=".5"></circle><circle cx="1125.1" cy="542" r=".5"></circle><circle cx="1117.9" cy="542" r=".5"></circle><circle cx="1117.9" cy="534.8" r=".5"></circle></g>
<!-- r1c9 text box -->
<rect x="1160.6" y="534.6" width="11.8" height="7.8" fill="#fff" stroke-width="1.4"></rect>
<path d="M1162.8,537.4 H1168.4 M1162.8,539.8 H1166.6" stroke-width="1"></path>
<!-- r1c10 output -->
<path d="M1213,535.6 H1205.6 V542.6 H1216.8 V538.6" stroke-width="1.4" fill="#fff"></path>
<path d="M1213.4,537.4 L1218.6,532.6 M1216.2,532.2 H1219 V535" stroke-width="1.1"></path>
<!-- r2c0 video -->
<rect x="754.7" y="557.3" width="12.2" height="10" rx="2.4" fill="#fff" stroke-width="1.3"></rect>
<path d="M758.6,560 V564.6 L762.8,562.3 Z" fill="#222" stroke-width=".6"></path>
<path d="M767,560.4 L769.8,559.2 V565.4 L767,564.2" stroke-width="1.2"></path>
<!-- r2c1 eyedropper -->
<path d="M808.2,560.6 L802,566.8 L801.4,568 L802.6,567.6 L809,561.4" stroke-width="1.2" fill="#fff"></path>
<path d="M807,558.6 L811.2,562.8 M808.4,560 L811,557 Q813,555.4 813.4,557.4 Q814,559 811.4,561.4 Z" fill="#111" stroke-width="1.6"></path>
<!-- r2c2 ruler -->
<rect x="844.7" y="559.6" width="13.8" height="6.8" fill="#fff" stroke-width="1.4"></rect>
<path d="M847.2,560 V562.6 M849.4,560 V562 M851.6,560 V562.6 M853.8,560 V562 M856,560 V562.6" stroke-width=".9"></path>
<!-- r2c3 crosshair -->
<path d="M889.4,562.5 H904 M896.7,555.2 V569.8" stroke-width="1.1"></path>
<circle cx="896.7" cy="562.5" r="2.6" stroke-width="1"></circle>
<!-- r2c4 bar -->
<rect x="933.6" y="558.4" width="15.6" height="9.2" fill="#c9c9c9" stroke="none" opacity=".75"></rect>
<rect x="934.6" y="560.4" width="13.6" height="5" fill="#fff" stroke-width="1.4"></rect>
<!-- r2c5 magnifier -->
<circle cx="986" cy="562.2" r="6.7" fill="#fff" stroke-width="1.3"></circle>
<path d="M990.8,566.8 L993.6,569.4" stroke-width="2.2" stroke-linecap="round"></path>
<path d="M991.2,567.2 L993.2,569" stroke="#fff" stroke-width=".7"></path>
<!-- r2c6 undo -->
<path d="M1031,561.4 C1034.5,559.4 1038.2,560.8 1037.8,563.8 C1037.5,566 1035,567.2 1032.6,566.4" stroke-width="1.3"></path>
<path d="M1026.4,561 L1031.6,560 L1030,564.8 Z" fill="#000" stroke-width=".8"></path>
<!-- r2c10 stopwatch -->
<circle cx="1211.4" cy="563.4" r="6" fill="#fff" stroke-width="1.3"></circle>
<path d="M1209.4,555.6 H1213.4 M1211.4,555.8 V557.6 M1216.2,557.6 L1217.6,559 M1211.4,563.4 L1214.6,560" stroke-width="1.2"></path>
</g>
<!-- r2c7 scanner -->
<path d="M1073.4,564.4 L1077.2,556.6 L1083.6,563.2 L1082.6,564.6 Z" fill="#5a5adc" stroke="#4a4acc" stroke-width=".8"></path>
<path d="M1075,563.4 L1077.6,558.6 L1081.6,563 Z" fill="#a8a8f0"></path>
<rect x="1070.6" y="565" width="13" height="4" fill="#b4b4bc" stroke="#5a5adc" stroke-width="1.1"></rect>
<!-- r2c8 pdf -->
<path d="M1117.6,556 H1125.2 L1128.6,559.4 V570.2 H1117.6 Z" fill="#fff" stroke="#b4b4b4" stroke-width=".9"></path>
<path d="M1125.2,556 V559.4 H1128.6" fill="#e8e8e8" stroke="#b4b4b4" stroke-width=".7"></path>
<rect x="1114.6" y="557.8" width="8.6" height="3.2" fill="#d80000"></rect>
<path d="M1119,568.6 C1121.6,567 1123.2,564 1122.6,562.4 C1122.2,561.6 1121.4,562.2 1121.8,563.8 C1122.4,565.8 1124.6,567.4 1127,567.2 C1125.4,566.2 1121.6,566.6 1119,568.6 Z" fill="none" stroke="#e83030" stroke-width=".9"></path>
<!-- r2c9 ribbon -->
<path d="M1161.6,558 L1166.6,558 L1168.8,555.6 L1172.6,555.6 V561.2 H1161.6 Z" fill="#f4f4fc" stroke="#9a92e2" stroke-width="1"></path>
<path d="M1161.6,564.2 H1172.6 V567.6 L1168.8,567.6 L1166.6,570 L1161.6,570 Z" fill="#f4f4fc" stroke="#9a92e2" stroke-width="1"></path>
</svg>

<div class="btn " style="left:8px;top:499px;width:80px;height:22px;"></div>
<span class="t" style="left: 29.3px; top: 503px; letter-spacing: 0.04px;">Сброс</span>
<div class="btn dis" style="left:512px;top:499px;width:89px;height:22px;background:#f9f9f9;border-color:#ebebeb;"></div>
<span class="t" style="left: 524.3px; top: 503px; color: rgb(160, 160, 160); letter-spacing: 0.12px;">Применить</span>
<div class="btn " style="left:615px;top:499px;width:80px;height:22px;border:2px solid #27b527;"></div>
<span class="t" style="left: 646.5px; top: 503px; letter-spacing: -0.52px;">OK</span>
<div class="btn " style="left:708px;top:499px;width:80px;height:22px;"></div>
<span class="t" style="left: 726.5px; top: 503px; letter-spacing: -0.21px;">Отмена</span>

</div>


</body></html>
